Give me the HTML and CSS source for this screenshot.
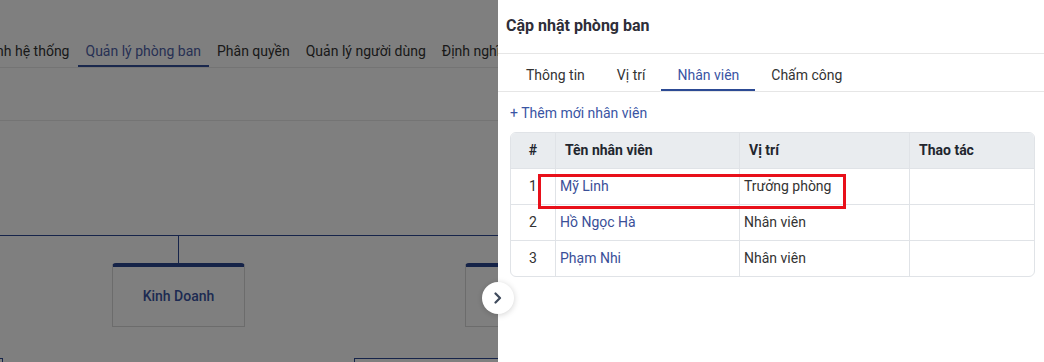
FILE: index.html
```html
<!DOCTYPE html>
<html lang="vi">
<head>
<meta charset="utf-8">
<title>Cập nhật phòng ban</title>
<link rel="stylesheet" href="styles.css">
</head>
<body>
<div class="page">
  <nav class="main-tabs">
    <a class="main-tab">Cấu hình hệ thống</a>
    <a class="main-tab active">Quản lý phòng ban</a>
    <a class="main-tab">Phân quyền</a>
    <a class="main-tab">Quản lý người dùng</a>
    <a class="main-tab">Định nghĩa</a>
  </nav>
  <div class="toolbar"></div>
  <div class="chart">
    <div class="hline h1"></div>
    <div class="vline v1"></div>
    <div class="node n1"><span>Kinh Doanh</span></div>
    <div class="node n2"><span>Kế Toán</span></div>
    <div class="sub s1"></div>
    <div class="sub s2"></div>
  </div>
</div>

<div class="overlay"></div>

<aside class="drawer">
  <header class="drawer-head">Cập nhật phòng ban</header>
  <div class="tabs">
    <a class="tab">Thông tin</a>
    <a class="tab">Vị trí</a>
    <a class="tab active">Nhân viên</a>
    <a class="tab">Chấm công</a>
  </div>
  <div class="drawer-body">
    <a class="add-link">+ Thêm mới nhân viên</a>
    <table class="grid">
      <colgroup>
        <col class="c-no"><col class="c-name"><col class="c-pos"><col>
      </colgroup>
      <thead>
        <tr><th class="no">#</th><th>Tên nhân viên</th><th>Vị trí</th><th>Thao tác</th></tr>
      </thead>
      <tbody>
        <tr><td class="no">1</td><td class="name">Mỹ Linh</td><td>Trưởng phòng</td><td></td></tr>
        <tr><td class="no">2</td><td class="name">Hồ Ngọc Hà</td><td>Nhân viên</td><td></td></tr>
        <tr><td class="no">3</td><td class="name">Phạm Nhi</td><td>Nhân viên</td><td></td></tr>
      </tbody>
    </table>
  </div>
  <div class="highlight"></div>
</aside>

<button class="collapse-btn" aria-label="Thu gọn">
  <svg width="10" height="12" viewBox="0 0 10 12"><path d="M2.5 1.5 L7 6 L2.5 10.5" fill="none" stroke="#3f4a5c" stroke-width="2.2" stroke-linecap="round" stroke-linejoin="round"/></svg>
</button>
</body>
</html>
```

FILE: styles.css
```css
* { box-sizing: border-box; }
html, body { margin: 0; padding: 0; }
body {
  font-family: Roboto, "Noto Sans", "Liberation Sans", sans-serif;
  font-size: 14px;
  color: #333;
  background: #fff;
  width: 1044px;
  height: 362px;
  overflow: hidden;
}

/* underlying page */
.page { position: relative; width: 1044px; height: 362px; overflow: hidden; }
.main-tabs {
  display: flex;
  align-items: flex-end;
  height: 68px;
  border-bottom: 1px solid #e8e8e8;
  margin-left: -51px;
  white-space: nowrap;
}
.main-tab {
  padding: 0 8px 4px;
  line-height: 20px;
  border-bottom: 2px solid transparent;
  color: #333;
}
.main-tab.active { color: #4f62a8; border-bottom-color: #34509a; }
.toolbar { height: 53px; border-bottom: 1px solid #e8e8e8; }

.chart { position: relative; height: 241px; overflow: hidden; }
.hline { position: absolute; height: 1px; background: #2c4894; }
.h1 { left: 0; width: 1044px; top: 114px; }
.vline { position: absolute; width: 1px; background: #2c4894; }
.v1 { left: 178px; top: 114px; height: 29px; }
.node {
  position: absolute;
  top: 142px;
  width: 133px;
  height: 64px;
  border: 1px solid #d8d8d8;
  border-top: 4px solid #2b4690;
  border-radius: 4px 4px 0 0;
  display: flex;
  align-items: center;
  justify-content: center;
  font-weight: 500;
  color: #3a55a4;
  padding-bottom: 1px;
}
.n1 { left: 112px; }
.n2 { left: 465px; }
.sub {
  position: absolute;
  top: 237px;
  height: 40px;
  border: 1px solid #2c4894;
  border-bottom: none;
}
.s1 { left: -200px; width: 203px; }
.s2 { left: 354px; width: 300px; }

.overlay {
  position: fixed;
  inset: 0;
  background: rgba(0, 0, 0, 0.5);
}

/* drawer */
.drawer {
  position: fixed;
  top: 0;
  right: 0;
  width: 546px;
  height: 100%;
  background: #fff;
}
.drawer-head {
  height: 54px;
  border-bottom: 1px solid #e6e6e6;
  padding: 0 8px 3px;
  display: flex;
  align-items: center;
  font-size: 16px;
  font-weight: 700;
  color: #2e2e38;
}
.tabs {
  display: flex;
  padding-left: 12px;
  border-bottom: 1px solid #e6e6e6;
}
.tab {
  padding: 11px 16px 4px;
  line-height: 20px;
  border-bottom: 2px solid transparent;
  color: #333;
}
.tab.active { color: #3a55a4; border-bottom-color: #2c4a94; }

.drawer-body { padding: 11px 9px 0 12px; }
.add-link { display: block; line-height: 20px; color: #3a55a4; margin-bottom: 9px; }

.grid {
  width: 100%;
  border-collapse: separate;
  border-spacing: 0;
  border: 1px solid #e0e3e7;
  border-radius: 6px;
  overflow: hidden;
  table-layout: fixed;
}
.c-no { width: 44px; }
.c-name { width: 184px; }
.c-pos { width: 170px; }
.grid th, .grid td {
  height: 36px;
  text-align: left;
  border-left: 1px solid #e0e3e7;
  border-top: 1px solid #e0e3e7;
  white-space: nowrap;
}
.grid th:first-child, .grid td:first-child { border-left: none; }
.grid thead th {
  border-top: none;
  background: #e9ecef;
  font-weight: 700;
  color: #22262e;
  padding: 0 9px 2px;
  height: 35px;
}
.grid td { padding: 0 4px 2px; color: #333; }
.grid .no { text-align: center; padding: 0 0 2px 0; }
.grid td.no { padding-left: 0; }
.grid td.name { color: #3a4f98; }

.highlight {
  position: absolute;
  left: 40px;
  top: 174px;
  width: 308px;
  height: 35px;
  border: 3px solid #e8101a;
}

.collapse-btn {
  position: fixed;
  left: 482px;
  top: 282px;
  width: 32px;
  height: 32px;
  border-radius: 50%;
  border: none;
  background: #fff;
  box-shadow: 0 1px 6px rgba(0, 0, 0, 0.18);
  display: flex;
  align-items: center;
  justify-content: center;
  padding: 0;
}
```
